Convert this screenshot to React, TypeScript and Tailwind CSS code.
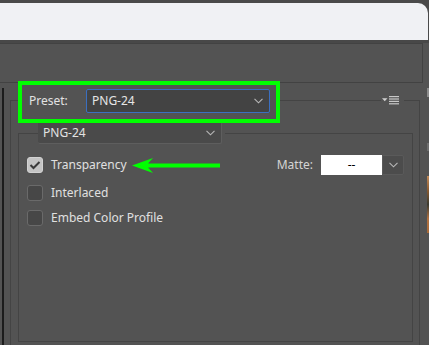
import React from "react";

const Chevron = ({ className = "" }: { className?: string }) => (
  <svg width="9" height="6" viewBox="0 0 9 6" className={className}>
    <polyline points="0.5,0.8 4.5,4.8 8.5,0.8" fill="none" stroke="#b8b8b8" strokeWidth="1.1" />
  </svg>
);

const MenuIcon = () => (
  <svg width="18" height="9" viewBox="0 0 18 9">
    <polygon points="0,2.2 5.5,2.2 2.75,5.2" fill="#d0d0d0" />
    <rect x="7" y="0" width="10" height="1.2" fill="#c8c8c8" />
    <rect x="7" y="2.4" width="10" height="1.2" fill="#c8c8c8" />
    <rect x="7" y="4.8" width="10" height="1.2" fill="#c8c8c8" />
    <rect x="7" y="7.2" width="10" height="1.2" fill="#c8c8c8" />
  </svg>
);

const Checkbox = ({ checked }: { checked?: boolean }) =>
  checked ? (
    <div className="w-[16px] h-[16px] rounded-[3px] bg-[#c4c4c4] border border-[#d2d2d2] flex items-center justify-center shrink-0">
      <svg width="12" height="10" viewBox="0 0 12 10">
        <polyline points="1.5,5 4.5,8 10.5,2" fill="none" stroke="#3a3a3a" strokeWidth="2" />
      </svg>
    </div>
  ) : (
    <div className="w-[16px] h-[16px] rounded-[3px] bg-[#474747] border border-[#6a6a6a] shrink-0" />
  );

export default function App() {
  return (
    <div
      className="w-[429px] h-[345px] overflow-hidden bg-[#535353] flex flex-col relative text-[#dedede] text-[12px]"
      style={{ fontFamily: '"Noto Sans", "Open Sans", sans-serif' }}
    >
      {/* top dark strip + light bar */}
      <div className="h-[3px] bg-[#4a4a4a] shrink-0" />
      <div className="h-[37px] bg-[#4a4a4a] shrink-0 flex">
        <div className="w-[428px] h-full bg-[#f0f1f4] rounded-tr-[10px]" />
      </div>
      <div className="h-[3px] bg-[#484848] shrink-0" />
      {/* top box */}
      <div className="h-[40px] w-[423px] border-t border-r border-b border-[#424242] shrink-0" />

      {/* main region */}
      <div className="flex flex-1 min-h-0">
        {/* left edge line */}
        <div className="w-[10px] shrink-0 flex flex-col">
          <div className="ml-[2px] mt-[5px] w-[2px] flex-1 bg-[#1c1c1c]" />
        </div>

        {/* outer group */}
        <div className="w-[410px] shrink-0 flex flex-col -mt-[2px]">
          {/* header row */}
          <div className="h-[42px] flex shrink-0">
            <div className="w-[8px] flex flex-col">
              <div className="h-[19px]" />
              <div className="flex-1 border-l border-t border-[#444]" />
            </div>
            <div className="w-[262px] relative flex items-start pt-[8px] pl-[11px]">
              <span className="text-[#e2e2e2] leading-[23px] w-[57px]">Preset:</span>
              <div className="w-[184px] h-[24px] rounded-[2px] border border-[#3b6fc0] bg-[#434343] flex items-center justify-between pl-[5px] pr-[6px]">
                <span className="text-[#e6e6e6]">PNG-24</span>
                <Chevron />
              </div>
              <div className="absolute inset-0 border-4 border-[#00ff00] z-10 pointer-events-none" />
            </div>
            <div className="flex-1 flex flex-col">
              <div className="h-[19px]" />
              <div className="flex-1 border-t border-[#444]" />
            </div>
            <div className="w-[23px] flex items-start pt-[15px] pl-[1px]">
              <MenuIcon />
            </div>
            <div className="w-[16px] flex flex-col">
              <div className="h-[19px]" />
              <div className="flex-1 border-t border-r border-[#444]" />
            </div>
          </div>

          {/* outer body */}
          <div className="flex-1 border-l border-r border-[#444] flex flex-col">
            {/* inner group */}
            <div className="ml-[7px] w-[395px] -mt-[1px] flex flex-col">
              {/* inner header */}
              <div className="h-[22px] flex shrink-0">
                <div className="w-[20px] flex flex-col">
                  <div className="h-[11px]" />
                  <div className="flex-1 border-l border-t border-[#444]" />
                </div>
                <div className="w-[184px] h-[22px] bg-[#4a4a4a] border-r border-b border-[#5e5e5e] rounded-[2px] flex items-center justify-between pl-[5px] pr-[6px]">
                  <span className="text-[#e2e2e2]">PNG-24</span>
                  <Chevron />
                </div>
                <div className="w-[3px]" />
                <div className="flex-1 flex flex-col">
                  <div className="h-[11px]" />
                  <div className="flex-1 border-t border-r border-[#444]" />
                </div>
              </div>
              {/* inner body */}
              <div className="h-[198px] border-l border-r border-b border-[#444] pl-[8px] pr-[8px] flex flex-col">
                <div className="mt-[11px] h-[20px] flex items-center">
                  <Checkbox checked />
                  <span className="ml-[8px] text-[#e0e0e0]">Transparency</span>
                  <div className="flex-1" />
                  <span className="text-[#d4d4d4] mr-[8px]">Matte:</span>
                  <div className="w-[61px] h-[20px] bg-white flex items-center justify-center text-black text-[12px]">--</div>
                  <div className="w-[22px] h-[20px] bg-[#4c4c4c] border border-[#5a5a5a] rounded-r-[2px] flex items-center justify-center">
                    <Chevron />
                  </div>
                </div>
                <div className="mt-[10px] h-[16px] flex items-center">
                  <Checkbox />
                  <span className="ml-[8px] text-[#e0e0e0]">Interlaced</span>
                </div>
                <div className="mt-[9px] h-[16px] flex items-center">
                  <Checkbox />
                  <span className="ml-[8px] text-[#e0e0e0]">Embed Color Profile</span>
                </div>
              </div>
            </div>
          </div>
        </div>

        {/* right edge bits */}
        <div className="ml-auto w-[2px] flex flex-col">
          <div className="mt-[5px] h-[9px] bg-[#8c8c8c]" />
          <div className="mt-[46px] h-[8px] bg-[#6e6e6e]" />
          <div className="mt-[25px] h-[57px] bg-[linear-gradient(#c08a5a,#8a5a30,#3a3a30,#b07040,#a86a38)]" />
        </div>
      </div>

      {/* green arrow annotation */}
      <svg
        className="absolute left-[131px] top-[157px] z-20"
        width="90"
        height="17"
        viewBox="0 0 90 17"
      >
        <polygon points="1,8.5 22,1 17,6.5 89,6.5 89,10.5 17,10.5 22,16" fill="#00ff00" />
      </svg>
    </div>
  );
}
